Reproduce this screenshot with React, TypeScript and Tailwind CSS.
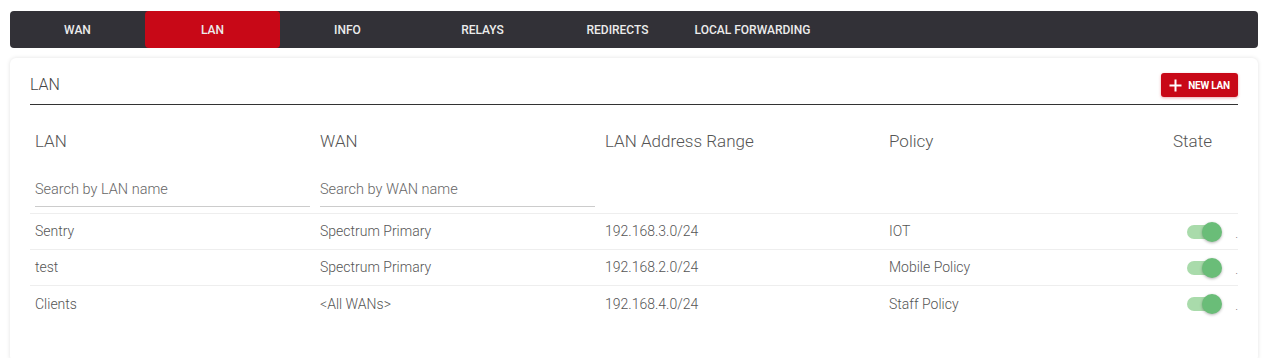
import { useState } from "react";

const tabs = ["WAN", "LAN", "INFO", "RELAYS", "REDIRECTS", "LOCAL FORWARDING"];

const lans = [
  { name: "Sentry", wan: "Spectrum Primary", range: "192.168.3.0/24", policy: "IOT", on: true },
  { name: "test", wan: "Spectrum Primary", range: "192.168.2.0/24", policy: "Mobile Policy", on: true },
  { name: "Clients", wan: "<All WANs>", range: "192.168.4.0/24", policy: "Staff Policy", on: true },
];

const cols = "grid grid-cols-[285px_285px_284px_284px_1fr]";

function Toggle({ on }: { on: boolean }) {
  return (
    <div className="relative w-[36px] h-[20px] flex items-center">
      <div className={`w-[34px] h-[14px] rounded-full ${on ? "bg-[#a9dbab]" : "bg-[#ccc]"}`}></div>
      <div
        className={`absolute top-0 w-[20px] h-[20px] rounded-full shadow-[0_1px_3px_rgba(0,0,0,0.3)] ${
          on ? "left-[15px] bg-[#6abd78]" : "left-0 bg-[#fafafa]"
        }`}
      ></div>
    </div>
  );
}

export default function App() {
  const [active, setActive] = useState("LAN");

  return (
    <div className="bg-white min-h-[358px] pl-[10px] pr-[12px] pt-[11px] font-['Roboto',sans-serif]">
      {/* Tab-meny */}
      <nav className="flex h-[37px] bg-[#323137] rounded-[4px]">
        {tabs.map((t) => (
          <button
            key={t}
            onClick={() => setActive(t)}
            className={`w-[135px] h-full flex items-center justify-center text-[12px] font-medium text-[#ececec] rounded-[4px] ${
              active === t ? "bg-[#c80817]" : ""
            }`}
          >
            {t}
          </button>
        ))}
      </nav>

      {/* Kort */}
      <div className="mt-[10px] bg-white rounded-[6px] shadow-[0_0_4px_rgba(0,0,0,0.12)] px-[20px] pt-[15px] pb-[40px]">
        <div className="flex items-center justify-between pb-[7px] border-b border-[#333]">
          <h1 className="text-[16px] font-light text-[#444]">LAN</h1>
          <button className="h-[24px] w-[77px] flex items-center justify-center gap-[6px] bg-[#c80817] rounded-[3px] shadow-[0_1px_3px_rgba(200,8,23,0.35)] text-white">
            <svg width="13" height="13" viewBox="0 0 13 13" className="shrink-0">
              <path d="M6.5 0.5v12M0.5 6.5h12" stroke="white" strokeWidth="2" />
            </svg>
            <span className="text-[10px] font-bold tracking-tight">NEW LAN</span>
          </button>
        </div>

        <div className="mt-[9px]">
          {/* Overskrifter */}
          <div className={`${cols} h-[56px] items-center text-[17px] font-light text-[#555]`}>
            <div className="px-[5px]">LAN</div>
            <div className="px-[5px]">WAN</div>
            <div className="px-[5px]">LAN Address Range</div>
            <div className="px-[5px]">Policy</div>
            <div className="px-[5px]">State</div>
          </div>

          {/* Søkefelt */}
          <div className={`${cols} pt-[7px] pb-[6px] border-b border-[#eee]`}>
            <div className="px-[5px]">
              <input
                placeholder="Search by LAN name"
                className="w-full text-[14.5px] leading-[16px] pb-[8px] border-b border-[#ccc] outline-none placeholder:text-[#666] font-light"
              />
            </div>
            <div className="px-[5px]">
              <input
                placeholder="Search by WAN name"
                className="w-full text-[14.5px] leading-[16px] pb-[8px] border-b border-[#ccc] outline-none placeholder:text-[#666] font-light"
              />
            </div>
          </div>

          {/* Rader */}
          {lans.map((l, i) => (
            <div
              key={l.name}
              className={`${cols} h-[36px] items-center text-[14px] font-light text-[#555] ${
                i < lans.length - 1 ? "border-b border-[#eee]" : ""
              }`}
            >
              <div className="px-[5px]">{l.name}</div>
              <div className="px-[5px]">{l.wan}</div>
              <div className="px-[5px]">{l.range}</div>
              <div className="px-[5px]">{l.policy}</div>
              <div className="flex items-center pl-[19px]">
                <Toggle on={l.on} />
                <span className="ml-auto mt-[6px] text-[10px] leading-none text-[#555]">.</span>
              </div>
            </div>
          ))}
        </div>
      </div>
    </div>
  );
}
